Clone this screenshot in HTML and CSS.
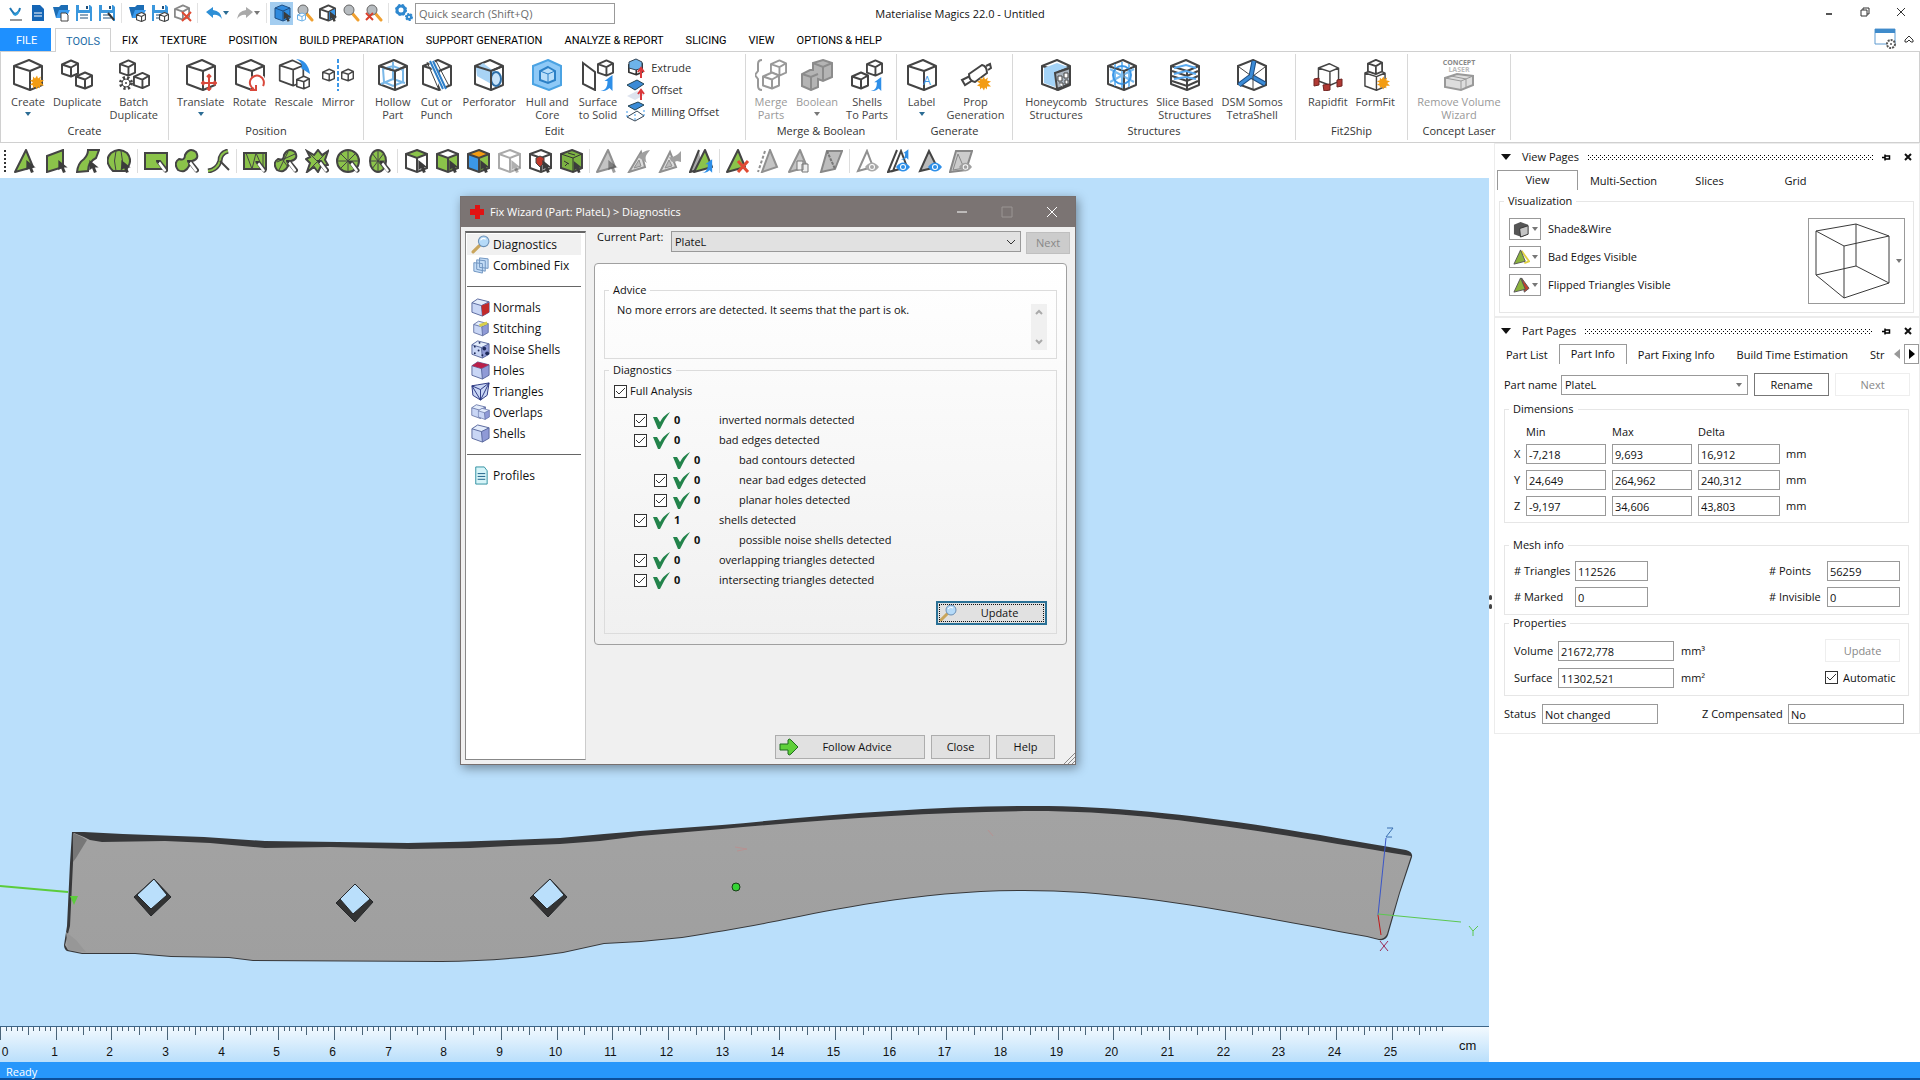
FILE: index.html
```html
<!DOCTYPE html>
<html lang="en">
<head>
  <meta charset="UTF-8">
  <meta name="viewport" content="width=device-width, initial-scale=1.0">
  <title>Materialise Magics 22.0 - Untitled</title>
  <link rel="stylesheet" href="styles.css">
</head>
<body>
  <!-- shared icon shapes -->
  <svg class="sprite" aria-hidden="true">
    <symbol id="box" viewBox="0 0 32 32"><path d="M17 1L30 7V26L18 31L2 25V7Z" fill="#fff"/><path d="M17 1L30 7V26L18 31L2 25V7ZM2 7L18 12L30 7M18 12V31" fill="none" stroke="currentColor" stroke-width="2" stroke-linejoin="round"/></symbol>
    <symbol id="box-sm" viewBox="0 0 18 18"><path d="M10 1L17 4V14L10 17L1 14V5Z" fill="#fff"/><path d="M10 1L17 4V14L10 17L1 14V5ZM1 5L10 8L17 4M10 8V17" fill="none" stroke="currentColor" stroke-width="2" stroke-linejoin="round"/></symbol>
    <symbol id="star" viewBox="0 0 14 14"><path d="M7 0L8 3L11 1L10 4L14 5L11 7L14 10L10 10L10 13L8 11L7 14L5 11L3 13L3 10L0 9L3 7L0 5L3 4L3 1L5 3Z" fill="#f39c12"/></symbol>
    <symbol id="cursor" viewBox="0 0 12 14"><path d="M1 0V11L4 9L6 14L9 13L7 8L11 8Z" fill="#3c3c3c"/></symbol>
    <symbol id="brush" viewBox="0 0 12 14"><path d="M2 1L10 11" stroke="#444" stroke-width="5" stroke-linecap="round"/><path d="M3 3L9 11" stroke="#fff" stroke-width="3" stroke-linecap="round"/><path d="M0 0L4 1L2 4Z" fill="#333"/></symbol>
    <symbol id="curl" viewBox="0 0 14 16"><path d="M1 16C7 15 8 11 8 6H5L13 0V16L10 13C7 16 4 16 1 16Z" fill="#2e8fe8"/></symbol>
    <symbol id="eye" viewBox="0 0 14 10"><path d="M0 5Q7 -4 14 5Q7 14 0 5Z" fill="currentColor"/><circle cx="7" cy="5" r="3" fill="#fff"/><circle cx="7" cy="5" r="2" fill="currentColor"/></symbol>
    <symbol id="tri" viewBox="0 0 24 24"><path d="M12 1L1 23L19 18Z" fill="#8bc34a" stroke="#444" stroke-width="2" stroke-linejoin="round"/></symbol>
    <symbol id="tri-gray" viewBox="0 0 24 24"><path d="M12 1L1 23L19 18Z" fill="#c4c4c4" stroke="#909090" stroke-width="2" stroke-linejoin="round"/></symbol>
    <symbol id="lens" viewBox="0 0 18 18"><path d="M2 16L8 10" stroke="#c9a55c" stroke-width="3" stroke-linecap="round"/><circle cx="12" cy="6" r="5" fill="#b5daf8" stroke="#6a8fb5" stroke-width="1"/><path d="M9 5Q11 2 14 4" fill="none" stroke="#fff"/></symbol>
    <symbol id="zoomer" viewBox="0 0 18 18"><path d="M10 9L16 16" stroke="#f0a030" stroke-width="3" stroke-linecap="round"/><circle cx="7" cy="6" r="5" fill="#b7bcc0" stroke="#666" stroke-width="1"/></symbol>
    <symbol id="floppy" viewBox="0 0 18 18"><path d="M1 1H15L17 3V17H1Z" fill="#3b97dd"/><path d="M4 1H14V6H4Z" fill="#fff"/><path d="M11 2H13V5H11Z" fill="#1f4e79"/><path d="M3 9H15V17H3Z" fill="#fff"/><path d="M5 11H13M5 14H13" stroke="#1f4e79"/></symbol>
    <symbol id="folder" viewBox="0 0 18 18"><path d="M1 3H7L9 1H16V14H4Z" fill="#1c6db5"/><path d="M4 14L7 6H18L14 14Z" fill="#3b9cf0"/></symbol>
    <symbol id="check" viewBox="0 0 17 17"><path d="M0 5L4 5L7 10Q10 4 17 0Q11 8 7 17H5Z" fill="#23834b"/></symbol>
    <symbol id="lbox" viewBox="0 0 20 20"><path d="M7 1L19 4V15L12 19L1 15V5Z" fill="#c9d6f5"/><path d="M7 1L19 4L11 8L1 5Z" fill="#e3ecfb"/><path d="M11 8L19 4V15L12 19Z" fill="#8f9ad6"/><path d="M7 1L19 4V15L12 19L1 15V5ZM1 5L11 8L19 4M11 8L12 19" fill="none" stroke="#58679c" stroke-width="1"/></symbol>
    <symbol id="pin" viewBox="0 0 12 10"><path d="M0 5H4M4 1V9M5 3H10V7H5" fill="none" stroke="#000" stroke-width="2"/></symbol>
    <symbol id="cross" viewBox="0 0 8 8"><path d="M1 1L7 7M7 1L1 7" stroke="currentColor" stroke-width="2"/></symbol>
  </svg>

  <header>
    <div class="titlebar">
      <div class="quick">
        <button class="qb" aria-label="Magics"><svg viewBox="0 0 18 18"><path d="M4 4Q7 9 9 10Q13 9 14 4" fill="none" stroke="#2077b4" stroke-width="2"/><path d="M6 9Q9 15 13 9V6L9 10Z" fill="#2e9bd8"/><path d="M4 16H16" stroke="#999" stroke-width="2"/></svg></button>
        <button class="qb" aria-label="New"><svg viewBox="0 0 18 18"><path d="M3 1H11L15 5V17H3Z" fill="#1565b5"/><path d="M5 9H13M5 12H13" stroke="#fff" stroke-width="1"/></svg></button>
        <button class="qb" aria-label="Open"><svg viewBox="0 0 18 18"><use href="#folder"/><path d="M9 9H14L16 11V17H9Z" fill="#fff" stroke="#444"/></svg></button>
        <button class="qb" aria-label="Save"><svg viewBox="0 0 18 18"><use href="#floppy"/></svg></button>
        <button class="qb" aria-label="Save as"><svg viewBox="0 0 18 18"><use href="#floppy"/><path d="M10 9L16 16" stroke="#333" stroke-width="2"/></svg></button>
        <span class="qsep"></span>
        <button class="qb" aria-label="Import part"><svg viewBox="0 0 18 18"><use href="#folder"/><use href="#box-sm" x="8" y="8" width="10" height="10" color="#444"/></svg></button>
        <button class="qb" aria-label="Save part"><svg viewBox="0 0 18 18"><use href="#floppy"/><use href="#box-sm" x="8" y="8" width="10" height="10" color="#444"/></svg></button>
        <button class="qb" aria-label="Unload part"><svg viewBox="0 0 18 18"><use href="#box-sm" width="16" height="17" color="#888"/><path d="M8 8L17 17M17 8L8 17" stroke="#e04a32" stroke-width="2"/></svg></button>
        <span class="qsep"></span>
        <button class="qb drop" aria-label="Undo"><svg viewBox="0 0 18 18"><path d="M1 8L8 3V6Q16 7 17 15Q13 10 8 11V14Z" fill="#2e8fd6"/></svg><i class="caret blue"></i></button>
        <button class="qb drop" aria-label="Redo"><svg viewBox="0 0 18 18"><path d="M17 8L10 3V6Q2 7 1 15Q5 10 10 11V14Z" fill="#a9a9a9"/></svg><i class="caret gray"></i></button>
        <span class="qsep"></span>
        <button class="qb on" aria-label="Pick part"><svg viewBox="0 0 18 18"><path d="M9 1L17 4V14L10 17L2 14V4Z" fill="#2f8ade" stroke="#1d4f86"/><path d="M2 4L10 7L17 4M10 7V17" fill="none" stroke="#1d4f86"/><use href="#cursor" x="10" y="7" width="9" height="11"/></svg></button>
        <button class="qb" aria-label="Zoom part"><svg viewBox="0 0 18 18"><use href="#zoomer"/><use href="#box-sm" x="1" y="8" width="9" height="10" color="#6bb0e6"/></svg></button>
        <button class="qb" aria-label="Select"><svg viewBox="0 0 18 18"><use href="#box-sm" width="17" height="18" color="#444"/><path d="M10 8L16 5V13L10 16Z" fill="#3b97e8"/><use href="#cursor" x="10" y="7" width="9" height="11"/></svg></button>
        <button class="qb" aria-label="Zoom"><svg viewBox="0 0 18 18"><use href="#zoomer"/></svg></button>
        <button class="qb" aria-label="Unzoom"><svg viewBox="0 0 18 18"><use href="#zoomer"/><path d="M1 9L8 16M8 9L1 16" stroke="#d8402c" stroke-width="2"/></svg></button>
        <span class="qsep"></span>
        <button class="qb" aria-label="Settings"><svg viewBox="0 0 18 18"><circle cx="6" cy="6" r="4" fill="none" stroke="#2f88cf" stroke-width="3"/><circle cx="6" cy="6" r="5" fill="none" stroke="#2f88cf" stroke-width="2" stroke-dasharray="2 2"/><circle cx="14" cy="13" r="2" fill="none" stroke="#2f88cf" stroke-width="2"/><circle cx="14" cy="13" r="3" fill="none" stroke="#2f88cf" stroke-width="2" stroke-dasharray="2 1"/></svg></button>
        <input class="search" type="text" placeholder="Quick search (Shift+Q)" aria-label="Quick search">
      </div>
      <div class="window-title">Materialise Magics 22.0 - Untitled</div>
      <div class="win-buttons">
        <button aria-label="Minimize"><svg viewBox="0 0 12 12"><path d="M3 8H9" stroke="#555" stroke-width="2"/></svg></button>
        <button aria-label="Restore"><svg viewBox="0 0 12 12"><path d="M2 4H8V10H2ZM4 4V2H10V8H8" fill="none" stroke="#333"/></svg></button>
        <button aria-label="Close"><svg viewBox="0 0 12 12"><path d="M2 2L10 10M10 2L2 10" stroke="#333"/></svg></button>
      </div>
    </div>

    <nav class="tabs">
      <a class="file" href="#">FILE</a>
      <a class="active" href="#">TOOLS</a>
      <a href="#">FIX</a>
      <a href="#">TEXTURE</a>
      <a href="#">POSITION</a>
      <a href="#">BUILD PREPARATION</a>
      <a href="#">SUPPORT GENERATION</a>
      <a href="#">ANALYZE &amp; REPORT</a>
      <a href="#">SLICING</a>
      <a href="#">VIEW</a>
      <a href="#">OPTIONS &amp; HELP</a>
      <div class="tabs-right">
        <svg class="layout-icon" viewBox="0 0 24 22"><path d="M1 1H21V16H1Z" fill="#fff" stroke="#5f9bd0" stroke-width="1"/><path d="M1 1H21V5H1Z" fill="#3f8bcb"/><circle cx="17" cy="16" r="4" fill="#fff" stroke="#555" stroke-width="2" stroke-dasharray="2 1"/><circle cx="17" cy="16" r="1" fill="#555"/></svg>
        <svg class="chev" viewBox="0 0 10 10"><path d="M1 6L5 2L9 6V8H7L5 6L3 8H1Z" fill="#fff" stroke="#333"/></svg>
      </div>
    </nav>

    <div class="ribbon">
      <section class="group g-create">
        <div class="items">
          <button class="rb"><svg viewBox="0 0 32 32"><use href="#box"/><use href="#star" x="18" y="16" width="14" height="15"/></svg><span>Create</span><i class="caret blue"></i></button>
          <button class="rb"><svg viewBox="0 0 32 32"><use href="#box-sm" x="0" y="0" width="18" height="19"/><use href="#box-sm" x="14" y="12" width="18" height="19"/></svg><span>Duplicate</span></button>
          <button class="rb"><svg viewBox="0 0 32 32"><use href="#box-sm" x="1" y="0" width="17" height="18"/><use href="#box-sm" x="15" y="12" width="17" height="19"/><circle cx="8" cy="24" r="5" fill="#fff" stroke="#444" stroke-width="4" stroke-dasharray="2 2"/><circle cx="8" cy="24" r="4" fill="#fff" stroke="#444"/><circle cx="8" cy="24" r="1" fill="#444"/></svg><span>Batch<br>Duplicate</span></button>
        </div>
        <h3>Create</h3>
      </section>
      <section class="group g-position">
        <div class="items">
          <button class="rb"><svg viewBox="0 0 32 32"><use href="#box"/><path d="M24 16V31M17 24H31M22 18L24 16L26 18M22 29L24 31L26 29M19 22L17 24L19 26M29 22L31 24L29 26" fill="none" stroke="#d9483b" stroke-width="2"/></svg><span>Translate</span><i class="caret blue"></i></button>
          <button class="rb"><svg viewBox="0 0 32 32"><use href="#box"/><circle cx="24" cy="23" r="8" fill="#fff"/><path d="M20 30A7 7 0 1 1 29 27M16 31H22V26" fill="none" stroke="#d9483b" stroke-width="2"/></svg><span>Rotate</span></button>
          <button class="rb"><svg viewBox="0 0 32 32"><use href="#box" x="0" y="0" width="27" height="28"/><path d="M18 0Q30 1 32 15L23 9Q26 4 18 0Z" fill="#2e8fe8"/><use href="#box-sm" x="18" y="16" width="14" height="15"/></svg><span>Rescale</span></button>
          <button class="rb"><svg viewBox="0 0 32 32"><use href="#box-sm" x="0" y="8" width="13" height="16"/><use href="#box-sm" x="19" y="8" width="13" height="16"/><path d="M16 0V32" stroke="#3b97e8" stroke-width="2" stroke-dasharray="4 2"/></svg><span>Mirror</span></button>
        </div>
        <h3>Position</h3>
      </section>
      <section class="group g-edit">
        <div class="items">
          <button class="rb"><svg viewBox="0 0 32 32"><use href="#box"/><path d="M6 10L16 7L26 11V23L16 27L7 23ZM16 3V20L4 25M16 20L28 24" fill="none" stroke="#7ab8e8" stroke-width="2"/><path d="M2 7L18 12L30 7M18 12V31" fill="none" stroke="#444" stroke-width="2"/></svg><span>Hollow<br>Part</span></button>
          <button class="rb"><svg viewBox="0 0 32 32"><use href="#box"/><path d="M7 1L20 31H26L13 1Z" fill="#fff"/><path d="M9 2L22 30M12 2L25 30" stroke="#2e7fc8" stroke-width="2"/><path d="M6 3L18 31M15 2L28 27" stroke="#444"/></svg><span>Cut or<br>Punch</span></button>
          <button class="rb"><svg viewBox="0 0 32 32"><use href="#box"/><path d="M3 9L10 4L26 16V25L20 26L4 17Z" fill="#a8d3f5"/><ellipse cx="23" cy="20" rx="5" ry="7" fill="#c7e3fa" stroke="#2e6fa8" stroke-width="2"/><path d="M2 7L18 12L30 7M18 12V31" fill="none" stroke="#444" stroke-width="2"/></svg><span>Perforator</span></button>
          <button class="rb"><svg viewBox="0 0 32 32"><path d="M17 1L30 7V26L18 31L2 25V7Z" fill="#8ec9f7" stroke="#4ba3e3" stroke-width="2"/><path d="M17 8L24 12V21L17 24L9 21V12Z" fill="#b9defa" stroke="#2c80c6" stroke-width="2"/><path d="M9 12L17 15L24 12M17 15V24" fill="none" stroke="#2c80c6"/></svg><span>Hull and<br>Core</span></button>
          <button class="rb"><svg viewBox="0 0 32 32"><path d="M1 4L13 13V31L1 25Z" fill="#fff" stroke="#444" stroke-width="2"/><use href="#box-sm" x="15" y="0" width="17" height="18"/><use href="#curl" x="17" y="16" width="15" height="16"/></svg><span>Surface<br>to Solid</span></button>
          <ul class="stack">
            <li><button><svg viewBox="0 0 20 22"><use href="#box-sm" x="2" y="0" width="15" height="22"/><path d="M3 5L10 2L16 5V11L10 13L3 11Z" fill="#6db3ea" stroke="#345" /><path d="M15 21V12M12 15L15 11L18 15" fill="none" stroke="#d9383b" stroke-width="2"/></svg>Extrude</button></li>
            <li><button><svg viewBox="0 0 20 22"><path d="M1 6L11 1L18 5L9 11Z" fill="#3b8bd6" stroke="#245"/><path d="M1 17L11 12L18 16L9 21Z" fill="#dde3ee"/><path d="M15 21V12M12 15L15 11L18 15" fill="none" stroke="#d9383b" stroke-width="2"/></svg>Offset</button></li>
            <li><button><svg viewBox="0 0 20 22"><path d="M2 5L12 1L18 4L9 9Z" fill="#3b8bd6" stroke="#245"/><path d="M1 16L11 10L18 15L9 20Z" fill="#fff" stroke="#345"/><path d="M1 10V16M18 9V15M9 13V20" stroke="#3b97e8" stroke-dasharray="2 2"/></svg>Milling Offset</button></li>
          </ul>
        </div>
        <h3>Edit</h3>
      </section>
      <section class="group g-merge">
        <div class="items">
          <button class="rb" disabled><svg viewBox="0 0 32 32"><path d="M7 1Q3 1 3 5V12L0 16L3 20V27Q3 31 7 31" fill="none" stroke="#999" stroke-width="2"/><use href="#box-sm" x="15" y="0" width="17" height="18"/><use href="#box-sm" x="7" y="12" width="18" height="19"/></svg><span>Merge<br>Parts</span></button>
          <button class="rb" disabled><svg viewBox="0 0 32 32"><path d="M22 1L31 4V18L22 22L17 20V28L10 31L1 27V15L9 11H12V4Z" fill="#b4b4b4" stroke="#8c8c8c" stroke-width="2"/><path d="M12 4L22 8L31 4M22 8V22M1 15L10 18L17 15M10 18V31" fill="none" stroke="#8c8c8c" stroke-width="2"/></svg><span>Boolean</span><i class="caret gray"></i></button>
          <button class="rb"><svg viewBox="0 0 32 32"><use href="#box-sm" x="15" y="0" width="17" height="18"/><use href="#box-sm" x="0" y="12" width="18" height="19"/><use href="#curl" x="18" y="18" width="14" height="14"/></svg><span>Shells<br>To Parts</span></button>
        </div>
        <h3>Merge &amp; Boolean</h3>
      </section>
      <section class="group g-generate">
        <div class="items">
          <button class="rb"><svg viewBox="0 0 32 32"><use href="#box"/><text x="21" y="26" class="cube-letter">A</text></svg><span>Label</span><i class="caret blue"></i></button>
          <button class="rb"><svg viewBox="0 0 32 32"><path d="M2 21L10 17L13 21L5 26Z" fill="#fff" stroke="#444" stroke-width="2"/><path d="M9 15L22 6Q27 7 27 14L15 23Q9 22 9 15Z" fill="#fff" stroke="#444" stroke-width="2"/><path d="M26 7L30 5L31 9L28 11" fill="none" stroke="#444" stroke-width="2"/><use href="#star" x="17" y="17" width="14" height="15"/></svg><span>Prop<br>Generation</span></button>
        </div>
        <h3>Generate</h3>
      </section>
      <section class="group g-structures">
        <div class="items">
          <button class="rb"><svg viewBox="0 0 32 32"><use href="#box"/><path d="M4 9L17 4L28 8L18 12L15 14V28L4 24Z" fill="#a4d3f7"/><path d="M15 14L30 9V25L17 30Z" fill="#aab4be" stroke="#444" stroke-width="2"/><path d="M18 17H22V22H18ZM24 14H28V19H24ZM19 24H23V28M25 21H28V25H25Z" fill="#fff" stroke="#444"/></svg><span>Honeycomb<br>Structures</span></button>
          <button class="rb"><svg viewBox="0 0 32 32"><use href="#box"/><path d="M16 3V29M4 10L28 23M28 10L4 23M9 5L9 27M23 5V28" stroke="#7abcf0" stroke-width="2"/><circle cx="16" cy="16" r="9" fill="none" stroke="#3b97e8" stroke-width="2"/><path d="M2 7L18 12L30 7M18 12V31" fill="none" stroke="#444" stroke-width="1"/></svg><span>Structures</span></button>
          <button class="rb"><svg viewBox="0 0 32 32"><use href="#box"/><path d="M3 12L18 17L29 12M3 17L18 22L29 17M3 22L18 27L29 22" fill="none" stroke="#444" stroke-width="2"/><path d="M5 9L17 6L27 9M5 15L17 12L27 15M5 20L17 18L27 20" fill="none" stroke="#5aaaf0" stroke-width="2"/></svg><span>Slice Based<br>Structures</span></button>
          <button class="rb"><svg viewBox="0 0 32 32"><path d="M17 1L30 7V26L18 31L2 25V7Z" fill="#fff" stroke="#444" stroke-width="2"/><path d="M18 2L15 17L3 26M15 17L29 25" fill="none" stroke="#1d4f86" stroke-width="5"/><path d="M18 2L15 17L3 26M15 17L29 25" fill="none" stroke="#3b8bd6" stroke-width="3"/><path d="M3 8L14 16M29 8L17 17V30" fill="none" stroke="#444" stroke-width="1"/></svg><span>DSM Somos<br>TetraShell</span></button>
        </div>
        <h3>Structures</h3>
      </section>
      <section class="group g-fit">
        <div class="items">
          <button class="rb"><svg viewBox="0 0 32 32"><use href="#box" x="5" y="3" width="23" height="25"/><path d="M2 20L7 19V26L2 27ZM25 21L30 20V27L25 28ZM11 26L18 25V31L12 32Z" fill="#b03a34" stroke="#6e2320"/></svg><span>Rapidfit</span></button>
          <button class="rb"><svg viewBox="0 0 32 32"><use href="#box" x="1" y="9" width="30" height="23"/><use href="#box-sm" x="8" y="0" width="16" height="16"/><use href="#star" x="18" y="17" width="13" height="14"/></svg><span>FormFit</span></button>
        </div>
        <h3>Fit2Ship</h3>
      </section>
      <section class="group g-laser">
        <div class="items">
          <button class="rb" disabled><svg viewBox="0 0 32 32"><text x="16" y="6" class="laser-dark">CONCEPT</text><text x="16" y="13" class="laser-light">LASER</text><path d="M2 19L14 15L30 17V26L18 31L2 28Z" fill="#ddd" stroke="#999" stroke-width="2"/><path d="M2 19L18 22L30 17M18 22V31M8 17L23 20M23 20V28" fill="none" stroke="#999" stroke-width="1"/></svg><span>Remove Volume<br>Wizard</span></button>
        </div>
        <h3>Concept Laser</h3>
      </section>
    </div>
  </header>

  <main>
    <div class="left">
      <div class="toolbar">
        <span class="grip"></span>
        <button class="tb" aria-label="Mark triangle"><svg viewBox="0 0 24 24"><use href="#tri"/><use href="#cursor" x="11" y="11" width="12" height="13"/></svg></button>
        <button class="tb" aria-label="Mark plane"><svg viewBox="0 0 24 24"><path d="M2 7L18 1V18L2 23Z" fill="#8bc34a" stroke="#444" stroke-width="2"/><use href="#cursor" x="12" y="11" width="12" height="13"/></svg></button>
        <button class="tb" aria-label="Mark surface"><svg viewBox="0 0 24 24"><path d="M12 1H23L20 9Q12 13 12 22L1 23Q2 14 8 10Q12 6 12 1Z" fill="#8bc34a" stroke="#444" stroke-width="2"/><use href="#cursor" x="12" y="11" width="12" height="13"/></svg></button>
        <button class="tb" aria-label="Mark shell"><svg viewBox="0 0 24 24"><path d="M6 22Q-4 12 4 4Q12 -2 20 4Q27 12 18 22Z" fill="#8bc34a" stroke="#444" stroke-width="2"/><path d="M9 22Q6 12 9 2M14 22Q17 12 14 2" fill="none" stroke="#444"/><use href="#cursor" x="13" y="11" width="12" height="13"/></svg></button>
        <span class="tsep"></span>
        <button class="tb" aria-label="Rectangle"><svg viewBox="0 0 24 24"><path d="M1 4H23V20H1Z" fill="#8bc34a" stroke="#444" stroke-width="2"/><use href="#brush" x="12" y="11" width="12" height="13"/></svg></button>
        <button class="tb" aria-label="Free form"><svg viewBox="0 0 24 24"><path d="M4 10Q10 12 10 6Q14 -2 21 3Q25 10 17 12Q14 13 14 17Q10 25 3 21Q-2 14 4 10Z" fill="#8bc34a" stroke="#444" stroke-width="2"/><use href="#brush" x="12" y="11" width="12" height="13"/></svg></button>
        <button class="tb" aria-label="Polyline"><svg viewBox="0 0 24 24"><path d="M22 2Q14 4 14 12Q11 21 2 22" fill="none" stroke="#444" stroke-width="5"/><path d="M22 2Q14 4 14 12Q11 21 2 22" fill="none" stroke="#8bc34a" stroke-width="2"/><path d="M14 12L23 21" stroke="#444" stroke-width="2"/></svg></button>
        <span class="tsep"></span>
        <button class="tb" aria-label="Window"><svg viewBox="0 0 24 24"><path d="M1 4H23V20H1Z" fill="#8bc34a" stroke="#444" stroke-width="2"/><path d="M3 4L9 20L13 4L20 20V4" fill="none" stroke="#444" stroke-width="1"/><use href="#brush" x="12" y="12" width="12" height="12"/></svg></button>
        <button class="tb" aria-label="Lasso"><svg viewBox="0 0 24 24"><path d="M4 10Q10 12 10 6Q14 -2 21 3Q25 10 17 12Q14 13 14 17Q10 25 3 21Q-2 14 4 10Z" fill="#8bc34a" stroke="#444" stroke-width="2"/><path d="M3 13L21 5M5 21L14 3M8 10L14 18" stroke="#444"/><use href="#brush" x="12" y="11" width="12" height="13"/></svg></button>
        <button class="tb" aria-label="Expand"><svg viewBox="0 0 24 24"><path d="M2 2L9 6L13 1L17 6L23 2L20 11L23 16L16 17L13 23L9 18L2 23L5 14L1 10L5 8Z" fill="#8bc34a" stroke="#444" stroke-width="2"/><path d="M3 3L20 20M22 3L4 21" stroke="#444"/><use href="#brush" x="12" y="11" width="12" height="13"/></svg></button>
        <button class="tb" aria-label="Ring"><svg viewBox="0 0 24 24"><circle cx="12" cy="12" r="11" fill="#8bc34a" stroke="#444" stroke-width="2"/><path d="M12 1V23M1 12H23M4 4L20 20M20 4L4 20" stroke="#444"/><use href="#brush" x="12" y="12" width="12" height="12"/></svg></button>
        <button class="tb" aria-label="Half ring"><svg viewBox="0 0 24 24"><ellipse cx="11" cy="12" rx="8" ry="11" fill="#8bc34a" stroke="#444" stroke-width="2"/><path d="M11 1V23M3 12H19M5 4L17 20M17 4L5 20" stroke="#444"/><use href="#brush" x="12" y="12" width="12" height="12"/></svg></button>
        <span class="tsep"></span>
        <button class="tb" aria-label="Top"><svg viewBox="0 0 24 24"><path d="M13 1L23 5L13 9L2 5Z" fill="#8bc34a"/><path d="M13 1L23 5V19L13 23L2 19V5ZM2 5L13 9L23 5M13 9V23" fill="none" stroke="#444" stroke-width="2"/><use href="#cursor" x="13" y="11" width="12" height="13"/></svg></button>
        <button class="tb" aria-label="Sides"><svg viewBox="0 0 24 24"><path d="M2 5L13 9L23 5V19L13 23L2 19Z" fill="#8bc34a"/><path d="M13 1L23 5V19L13 23L2 19V5ZM2 5L13 9L23 5M13 9V23" fill="none" stroke="#444" stroke-width="2"/><use href="#cursor" x="13" y="11" width="12" height="13"/></svg></button>
        <button class="tb" aria-label="Colors"><svg viewBox="0 0 24 24"><path d="M13 1L23 5L13 9L2 5Z" fill="#f39c12"/><path d="M2 5L13 9V23L2 19Z" fill="#3b97e8"/><path d="M13 9L23 5V19L13 23Z" fill="#8bc34a"/><path d="M13 1L23 5V19L13 23L2 19V5ZM2 5L13 9L23 5M13 9V23" fill="none" stroke="#444" stroke-width="2"/><use href="#cursor" x="13" y="11" width="12" height="13"/></svg></button>
        <button class="tb" aria-label="Wire" disabled><svg viewBox="0 0 24 24"><path d="M13 1L23 5V19L13 23L2 19V5ZM2 5L13 9L23 5M13 9V23" fill="none" stroke="#aaa" stroke-width="2"/><use href="#cursor" x="13" y="11" width="12" height="13" opacity="0.4"/></svg></button>
        <button class="tb" aria-label="Hole"><svg viewBox="0 0 24 24"><path d="M13 1L23 5V19L13 23L2 19V5ZM2 5L13 9L23 5M13 9V23" fill="none" stroke="#444" stroke-width="2"/><path d="M8 9L12 7L16 9V14L12 18L8 14Z" fill="#c0392b" stroke="#444"/><use href="#cursor" x="13" y="11" width="12" height="13"/></svg></button>
        <button class="tb" aria-label="All"><svg viewBox="0 0 24 24"><path d="M13 1L23 5V19L14 23L2 19V5Z" fill="#7cb342" stroke="#444" stroke-width="2"/><path d="M2 5L14 9L23 5M14 9V23M5 12L10 15M6 17L9 14M9 4L16 6" fill="none" stroke="#333" stroke-width="1"/><use href="#cursor" x="13" y="12" width="12" height="12"/></svg></button>
        <span class="tsep"></span>
        <button class="tb" aria-label="Unmark" disabled><svg viewBox="0 0 24 24"><use href="#tri-gray"/><use href="#cursor" x="11" y="11" width="12" height="13" opacity="0.5"/></svg></button>
        <button class="tb" aria-label="Unmark all" disabled><svg viewBox="0 0 24 24"><path d="M14 3L2 23L18 18Z" fill="#ddd" stroke="#909090" stroke-width="2"/><path d="M12 11L7 19L14 17Z" fill="#bbb" stroke="#909090"/><path d="M11 8Q15 2 23 1L20 5Q17 9 20 14Z" fill="#a0a0a0"/></svg></button>
        <button class="tb" aria-label="Invert part" disabled><svg viewBox="0 0 24 24"><path d="M12 3L2 23L18 18Z" fill="#ddd" stroke="#909090" stroke-width="2"/><path d="M11 11L7 19L14 17Z" fill="#bbb" stroke="#909090"/><path d="M11 8Q17 9 23 2V13L19 12Q15 14 13 12Z" fill="#a0a0a0"/></svg></button>
        <button class="tb" aria-label="Invert"><svg viewBox="0 0 24 24"><path d="M10 1L1 23L13 20" fill="#aaa" stroke="#444" stroke-width="2"/><use href="#tri" x="4"/><use href="#curl" x="12" y="10" width="12" height="14"/></svg></button>
        <span class="tsep"></span>
        <button class="tb" aria-label="Delete marked"><svg viewBox="0 0 24 24"><use href="#tri"/><path d="M12 12L22 23M22 12L12 23" stroke="#e04a32" stroke-width="3"/></svg></button>
        <button class="tb" aria-label="Separate" disabled><svg viewBox="0 0 24 24"><path d="M8 2L1 23" stroke="#909090" stroke-width="2" stroke-dasharray="3 2"/><path d="M13 1L5 23L20 18Z" fill="#c4c4c4" stroke="#909090" stroke-width="2"/></svg></button>
        <button class="tb" aria-label="Copy" disabled><svg viewBox="0 0 24 24"><use href="#tri-gray"/><path d="M9 12H15V21H9ZM14 15H20V23H14Z" fill="#eee" stroke="#777"/></svg></button>
        <button class="tb" aria-label="Fill" disabled><svg viewBox="0 0 24 24"><path d="M8 2H23L16 20L2 23Z" fill="#bdbdbd" stroke="#888" stroke-width="2"/><path d="M8 2L16 20" stroke="#777" stroke-width="2" stroke-dasharray="3 1"/></svg></button>
        <span class="tsep"></span>
        <button class="tb" aria-label="Hide" disabled><svg viewBox="0 0 24 24"><path d="M11 2L2 22L17 18Z" fill="#fff" stroke="#909090" stroke-width="2"/><use href="#eye" x="9" y="13" width="14" height="10" color="#a9a9a9"/></svg></button>
        <button class="tb" aria-label="Toggle"><svg viewBox="0 0 24 24"><path d="M10 1L1 23L13 20M14 2L6 22L20 18Z" fill="#fff" stroke="#444" stroke-width="2"/><use href="#curl" x="13" y="0" width="9" height="11"/><use href="#eye" x="9" y="13" width="14" height="10" color="#2e8fe8"/></svg></button>
        <button class="tb" aria-label="Show"><svg viewBox="0 0 24 24"><path d="M11 2L2 22L19 18Z" fill="#bbb" stroke="#444" stroke-width="2"/><use href="#eye" x="10" y="13" width="14" height="10" color="#2e8fe8"/></svg></button>
        <button class="tb" aria-label="Show all" disabled><svg viewBox="0 0 24 24"><path d="M7 2H23L17 21L1 23Z" fill="#ccc" stroke="#888" stroke-width="2"/><path d="M9 5L15 19L4 21Z" fill="none" stroke="#888" stroke-width="1"/><use href="#eye" x="10" y="13" width="13" height="10" color="#a0a0a0"/></svg></button>
      </div>

      <div class="viewport">
        <svg class="scene" viewBox="0 178 1489 848" preserveAspectRatio="xMinYMax slice">
          <defs>
            <linearGradient id="steel" x1="0" y1="0" x2="0" y2="1">
              <stop offset="0" stop-color="#a3a3a3"/><stop offset="1" stop-color="#9f9f9f"/>
            </linearGradient>
          </defs>
          <!-- plate side, then its face -->
          <path d="M72 832L84 832L123 834L204 837L265 841Q340 842 408 843Q460 842 510 840L560 838L604 834L640 831L722 825C830 815 930 806 1033 806C1150 806 1260 824 1406 850Q1413 852 1412 857L1400 893L1388 935Q1386 941 1379 940L1367 937C1230 912 1130 891 1024 891C920 891 830 911 784 920C745 928 720 932 682 938L641 942L604 944L563 953Q510 961 441 962L253 961L229 958L171 957L135 954L82 954L67 951Q64 949 64 945L67 926L70 863Z" fill="#37383a"/>
          <path d="M74 833L84 837L90 840L102 842L165 841L210 843L265 848L330 847L410 849L470 848L510 846L560 844L600 841L640 836L722 829C830 819 930 812 1033 811C1150 811 1260 831 1411 856L1399 893L1387 934Q1385 939 1379 939L1367 936C1230 911 1130 890 1024 890C920 890 830 910 784 919C745 927 720 931 682 937L641 941L604 943L563 952Q510 960 441 961L253 960L229 957L171 956L135 953L82 953L68 950L65 945L70 926L73 863Z" fill="url(#steel)"/>
          <path d="M73 833L82 837L87 840L76 858L73 862Z" fill="#777"/>
          <path d="M66 932L76 940L86 952L68 950Z" fill="#979797"/>
          <path d="M735 847L747 849L737 851M988 830L993 836" fill="none" stroke="#b79292" stroke-width="1"/>
          <g stroke="#25282b" stroke-width="1">
            <path d="M154 879L171 897L151 916L134 897Z" fill="#333"/>
            <path d="M154 879L167 895L151 909L137 895Z" fill="#badffb"/>
            <path d="M355 884L373 902L355 922L336 903Z" fill="#333"/>
            <path d="M355 884L370 899L353 914L340 899Z" fill="#badffb"/>
            <path d="M550 879L567 897L548 917L530 898Z" fill="#333"/>
            <path d="M550 879L564 895L547 909L533 895Z" fill="#badffb"/>
          </g>
          <path d="M0 886L68 892" stroke="#5ccc3c" stroke-width="2"/>
          <path d="M70 896H78L74 905Z" fill="#5ccc3c"/>
          <circle cx="736" cy="887" r="4" fill="#35d435" stroke="#173d17"/>
          <path d="M1386 838L1378 915" stroke="#3a56c8" stroke-width="1"/>
          <path d="M1378 915L1381 935" stroke="#c01818" stroke-width="1"/>
          <path d="M1378 914L1461 922" stroke="#5cc850" stroke-width="1"/>
          <g fill="none" stroke-width="1">
            <path d="M1387 828H1393L1386 837H1392" stroke="#3a6fb0"/>
            <path d="M1380 941L1388 951M1388 941L1380 951" stroke="#9a2c55"/>
            <path d="M1469 926L1473 931L1478 926M1473 931V936" stroke="#5cc850"/>
          </g>
        </svg>

        <div class="dialog" role="dialog" aria-label="Fix Wizard">
          <div class="dialog-title">
            <svg class="plus" viewBox="0 0 14 14"><path d="M5 0H10V4H14V10H10V14H5V10H0V4H5Z" fill="#e01212"/></svg>
            <span>Fix Wizard (Part: PlateL) &gt; Diagnostics</span>
            <div class="dialog-controls">
              <button aria-label="Minimize"><svg viewBox="0 0 12 12"><path d="M1 6H11" stroke="#fff"/></svg></button>
              <button aria-label="Maximize" disabled><svg viewBox="0 0 12 12"><path d="M1 1H11V11H1Z" fill="none" stroke="#9b9594"/></svg></button>
              <button aria-label="Close"><svg viewBox="0 0 12 12"><path d="M1 1L11 11M11 1L1 11" stroke="#fff"/></svg></button>
            </div>
          </div>
          <div class="dialog-body">
            <ul class="pages">
              <li class="active"><a href="#"><svg viewBox="0 0 18 18"><use href="#lens"/></svg>Diagnostics</a></li>
              <li><a href="#"><svg viewBox="0 0 20 20"><path d="M3 7L12 8V18L3 16ZM6 4L15 5V16L6 14ZM9 2L18 3V13L9 12Z" fill="#c3dcf6" stroke="#6f93c0"/></svg>Combined Fix</a></li>
              <li class="rule"></li>
              <li><a href="#"><svg viewBox="0 0 20 20"><use href="#lbox"/><path d="M11 8L19 5V15L12 19Z" fill="#c22a2a"/></svg>Normals</a></li>
              <li><a href="#"><svg viewBox="0 0 20 20"><use href="#lbox" x="2" y="1" width="17" height="18"/><path d="M9 7L17 4" stroke="#d8cf4a" stroke-width="3"/></svg>Stitching</a></li>
              <li><a href="#"><svg viewBox="0 0 20 20"><use href="#lbox"/><g fill="#1e2a5a"><circle cx="4" cy="7" r="1"/><circle cx="8" cy="11" r="1"/><circle cx="4" cy="14" r="1"/><circle cx="14" cy="9" r="2"/><circle cx="17" cy="14" r="2"/><circle cx="9" cy="3" r="1"/><circle cx="12" cy="16" r="1"/></g></svg>Noise Shells</a></li>
              <li><a href="#"><svg viewBox="0 0 20 20"><use href="#lbox"/><path d="M7 1L19 4L11 8L1 5Z" fill="#b8204a"/></svg>Holes</a></li>
              <li><a href="#"><svg viewBox="0 0 20 20"><path d="M7 3L19 1L17 14L10 19L2 14L1 4Z" fill="#c9d6f5" stroke="#29357f"/><path d="M1 4L10 8L19 1M10 8V19M1 4L10 19L19 1" fill="none" stroke="#29357f"/></svg>Triangles</a></li>
              <li><a href="#"><svg viewBox="0 0 20 20"><use href="#lbox" x="0" y="0" width="16" height="18"/><use href="#lbox" x="7" y="4" width="13" height="15"/></svg>Overlaps</a></li>
              <li><a href="#"><svg viewBox="0 0 20 20"><use href="#lbox"/></svg>Shells</a></li>
              <li class="rule"></li>
              <li><a href="#"><svg viewBox="0 0 20 20"><path d="M5 1H14L17 5V19H5Z" fill="#d6f4f8" stroke="#2f8fa0"/><path d="M7 8H15M7 11H15M7 14H15" stroke="#1c5f86" stroke-width="1"/></svg>Profiles</a></li>
            </ul>
            <div class="wizard">
              <div class="part-row">
                <label for="current-part">Current Part:</label>
                <select id="current-part"><option>PlateL</option></select>
                <button class="btn" disabled>Next</button>
              </div>
              <div class="panel">
                <fieldset class="advice">
                  <legend>Advice</legend>
                  <p>No more errors are detected. It seems that the part is ok.</p>
                  <div class="scroll">
                    <svg viewBox="0 0 10 10"><path d="M2 7L5 4L8 7" fill="none" stroke="#aaa" stroke-width="2"/></svg>
                    <svg viewBox="0 0 10 10"><path d="M2 3L5 6L8 3" fill="none" stroke="#aaa" stroke-width="2"/></svg>
                  </div>
                </fieldset>
                <fieldset class="diag">
                  <legend>Diagnostics</legend>
                  <label class="full"><input type="checkbox" checked>Full Analysis</label>
                  <label class="row"><input type="checkbox" checked><svg><use href="#check"/></svg><b>0</b>inverted normals detected</label>
                  <label class="row"><input type="checkbox" checked><svg><use href="#check"/></svg><b>0</b>bad edges detected</label>
                  <div class="row bare"><svg><use href="#check"/></svg><b>0</b>bad contours detected</div>
                  <label class="row sub"><input type="checkbox" checked><svg><use href="#check"/></svg><b>0</b>near bad edges detected</label>
                  <label class="row sub"><input type="checkbox" checked><svg><use href="#check"/></svg><b>0</b>planar holes detected</label>
                  <label class="row"><input type="checkbox" checked><svg><use href="#check"/></svg><b>1</b>shells detected</label>
                  <div class="row bare"><svg><use href="#check"/></svg><b>0</b>possible noise shells detected</div>
                  <label class="row"><input type="checkbox" checked><svg><use href="#check"/></svg><b>0</b>overlapping triangles detected</label>
                  <label class="row"><input type="checkbox" checked><svg><use href="#check"/></svg><b>0</b>intersecting triangles detected</label>
                  <button class="btn update"><svg viewBox="0 0 18 18"><use href="#lens"/></svg><span>Update</span></button>
                </fieldset>
              </div>
              <div class="actions">
                <button class="btn follow"><svg viewBox="0 0 20 18"><path d="M1 6H9V2Q10 0 12 2L19 9L12 16Q10 18 9 16V12H1Z" fill="#5fd03a" stroke="#1f6b1f" stroke-width="1"/></svg><span>Follow Advice</span></button>
                <button class="btn">Close</button>
                <button class="btn">Help</button>
              </div>
            </div>
          </div>
          <svg class="resize" viewBox="0 0 12 12"><path d="M1 12L12 1M5 12L12 5M9 12L12 9" stroke="#888"/></svg>
        </div>
      </div>

      <svg class="ruler" id="ruler"><text class="unit" x="1459" y="23">cm</text></svg>
    </div>

    <aside>
      <div class="splitter"><i></i><i></i></div>
      <div class="side">
        <section class="side-section">
          <div class="side-head"><i class="fold"></i><h2>View Pages</h2><span class="dots"></span><svg class="pin"><use href="#pin"/></svg><svg class="x"><use href="#cross"/></svg></div>
          <div class="side-tabs even">
            <a class="active" href="#">View</a><a href="#">Multi-Section</a><a href="#">Slices</a><a href="#">Grid</a>
          </div>
          <fieldset class="visual">
            <legend>Visualization</legend>
            <div class="modes">
              <div><button class="pick" id="m1"><svg viewBox="0 0 18 18"><path d="M8 1L16 4V14L9 17L1 14V4Z" fill="#555"/><path d="M7 8L16 5V14L8 17Z" fill="#c4c4c4" stroke="#333"/></svg><i class="caret gray"></i></button><label for="m1">Shade&amp;Wire</label></div>
              <div><button class="pick" id="m2"><svg viewBox="0 0 18 18"><path d="M9 2L17 13L12 15" fill="none" stroke="#e0d040" stroke-width="2"/><path d="M8 1L1 16L13 13Z" fill="#8bb33c" stroke="#555"/></svg><i class="caret gray"></i></button><label for="m2">Bad Edges Visible</label></div>
              <div><button class="pick" id="m3"><svg viewBox="0 0 18 18"><path d="M9 1L17 12L12 16Z" fill="#c2402c" stroke="#555"/><path d="M8 1L1 16L13 13Z" fill="#8bb33c" stroke="#555"/></svg><i class="caret gray"></i></button><label for="m3">Flipped Triangles Visible</label></div>
            </div>
            <button class="orient" aria-label="Orientation">
              <svg viewBox="0 0 76 78"><path d="M2 9L42 2L75 14L30 24ZM2 9V53L30 76V24M30 76L75 61V14M2 53L42 44L75 61M42 44V2" fill="none" stroke="#3a3a3a" stroke-width="1"/></svg>
              <i class="caret gray"></i>
            </button>
          </fieldset>
        </section>
        <section class="side-section">
          <div class="side-head"><i class="fold"></i><h2>Part Pages</h2><span class="dots"></span><svg class="pin"><use href="#pin"/></svg><svg class="x"><use href="#cross"/></svg></div>
          <div class="side-tabs">
            <div class="tab-list"><a href="#">Part List</a><a class="active" href="#">Part Info</a><a href="#">Part Fixing Info</a><a href="#">Build Time Estimation</a><a class="last" href="#">Str</a></div>
            <button class="arrow" aria-label="Scroll left"><svg viewBox="0 0 8 12"><path d="M7 1V11L1 6Z" fill="#999"/></svg></button>
            <button class="arrow boxed" aria-label="Scroll right"><svg viewBox="0 0 8 12"><path d="M1 1V11L7 6Z" fill="#000"/></svg></button>
          </div>
          <div class="name-row">
            <label for="part-name">Part name</label>
            <select id="part-name"><option>PlateL</option></select>
            <button class="flat">Rename</button>
            <button class="flat" disabled>Next</button>
          </div>
          <fieldset class="dims">
            <legend>Dimensions</legend>
            <table>
              <tr><th></th><th>Min</th><th>Max</th><th>Delta</th><th></th></tr>
              <tr><th>X</th><td><input value="-7,218" aria-label="X min"></td><td><input value="9,693" aria-label="X max"></td><td><input value="16,912" aria-label="X delta"></td><td>mm</td></tr>
              <tr><th>Y</th><td><input value="24,649" aria-label="Y min"></td><td><input value="264,962" aria-label="Y max"></td><td><input value="240,312" aria-label="Y delta"></td><td>mm</td></tr>
              <tr><th>Z</th><td><input value="-9,197" aria-label="Z min"></td><td><input value="34,606" aria-label="Z max"></td><td><input value="43,803" aria-label="Z delta"></td><td>mm</td></tr>
            </table>
          </fieldset>
          <fieldset class="mesh">
            <legend>Mesh info</legend>
            <div class="mesh-grid">
              <label for="tris"># Triangles</label><input id="tris" value="112526"><span></span>
              <label for="points"># Points</label><input id="points" value="56259">
              <label for="marked"># Marked</label><input id="marked" value="0"><span></span>
              <label for="invis"># Invisible</label><input id="invis" value="0">
            </div>
          </fieldset>
          <fieldset class="props">
            <legend>Properties</legend>
            <div class="props-grid">
              <label for="volume">Volume</label><input id="volume" value="21672,778"><span>mm³</span>
              <button class="flat" disabled>Update</button>
              <label for="surface">Surface</label><input id="surface" value="11302,521"><span>mm²</span>
              <label class="auto"><input type="checkbox" checked>Automatic</label>
            </div>
          </fieldset>
          <div class="status-row">
            <label for="status">Status</label><input id="status" value="Not changed"><span></span>
            <label for="zcomp">Z Compensated</label><input id="zcomp" value="No">
          </div>
        </section>
      </div>
    </aside>
  </main>

  <footer>Ready</footer>

  <script>
    // Draw the centimetre ruler
    const ruler = document.getElementById('ruler');
    const ns = 'http://www.w3.org/2000/svg';
    const cm = 55.66;

    for (let i = 0; i < 260; i++) {
      const x = Math.round(i * cm / 10) + 0.5;
      const len = i % 10 === 0 ? 13 : i % 5 === 0 ? 8 : 4;
      const tick = document.createElementNS(ns, 'path');
      tick.setAttribute('d', `M${x} 0V${len}`);
      ruler.appendChild(tick);

      if (i % 10 === 0) {
        const label = document.createElementNS(ns, 'text');
        label.setAttribute('x', i === 0 ? 5 : x - 2);
        label.setAttribute('y', 29);
        label.textContent = i / 10;
        ruler.appendChild(label);
      }
    }
  </script>
</body>
</html>
```
FILE: styles.css
```css
* {
  box-sizing: border-box;
}

body {
  margin: 0;
  height: 100vh;
  display: flex;
  flex-direction: column;
  overflow: hidden;
  background: #fff;
  color: #111;
  font-family: "Open Sans", "Noto Sans", sans-serif;
  font-size: 11px;
  line-height: 16px;
}

button, input, select {
  font: inherit;
  color: inherit;
  margin: 0;
  padding: 0;
}

button {
  border: none;
  background: none;
}

a {
  color: inherit;
  text-decoration: none;
}

ul {
  list-style: none;
  margin: 0;
  padding: 0;
}

h2, h3, p {
  margin: 0;
  font-size: 11px;
  font-weight: normal;
}

fieldset {
  margin: 0;
  min-width: 0;
}

legend {
  padding: 0 4px;
}

.sprite {
  display: none;
}

.caret {
  display: inline-block;
  border: 3px solid transparent;
  border-top: 4px solid #777;
  border-bottom: none;
}

.caret.blue {
  border-top-color: #2b6c94;
}

/* title bar */
.titlebar {
  display: grid;
  grid-template-columns: 1fr auto 1fr;
  height: 28px;
}

.quick {
  display: flex;
  align-items: center;
  height: 26px;
  padding-left: 3px;
}

.qb {
  flex: none;
  width: 23px;
  height: 23px;
  display: flex;
  align-items: center;
  justify-content: center;
}

.qb svg {
  flex: none;
  width: 18px;
  height: 18px;
}

.qb.drop {
  width: 31px;
}

.qb.on {
  background: #a3cdf0;
}

.qsep {
  flex: none;
  width: 1px;
  height: 20px;
  margin: 0 3px;
  background: #e2e2e2;
}

.search {
  width: 200px;
  height: 21px;
  padding: 0 3px;
  border: 1px solid #999;
}

.search::placeholder {
  color: #6b6b6b;
}

.window-title {
  line-height: 28px;
}

.win-buttons {
  display: flex;
  justify-content: flex-end;
  gap: 24px;
  padding: 6px 13px 0 0;
}

.win-buttons button {
  width: 12px;
  height: 12px;
}

.win-buttons svg, .dialog-controls svg {
  display: block;
}

/* ribbon tabs */
.tabs {
  display: flex;
  height: 23px;
  font-family: Roboto, "Open Sans", sans-serif;
  line-height: 26px;
  color: #000;
}

.tabs a {
  padding: 0 11px;
}

.tabs .file {
  width: 51px;
  padding: 0 16px;
  margin-right: 4px;
  background: #1e90ff;
  color: #fff;
}

.tabs .active {
  position: relative;
  height: 24px;
  padding: 0 10px;
  border: 1px solid #d0d0d0;
  border-bottom: none;
  background: #fff;
  color: #1c6ba5;
}

.tabs-right {
  display: flex;
  gap: 6px;
  margin-left: auto;
  padding-right: 6px;
}

.layout-icon {
  width: 24px;
  height: 22px;
}

.chev {
  width: 10px;
  height: 10px;
  margin-top: 6px;
}

/* ribbon */
.ribbon {
  display: flex;
  height: 92px;
  border: 1px solid #d0d0d0;
}

.group {
  display: flex;
  flex-direction: column;
  justify-content: space-between;
  margin: 2px 0;
  border-right: 1px solid #d8d8d8;
  color: #333;
}

.g-create { width: 168px; }
.g-position { width: 195px; }
.g-edit { width: 382px; }
.g-merge { width: 151px; }
.g-generate { width: 116px; }
.g-structures { width: 283px; }
.g-fit { width: 112px; }
.g-laser { width: 103px; }

.group h3 {
  text-align: center;
  padding-bottom: 1px;
}

.items {
  display: flex;
  justify-content: center;
}

.rb {
  min-width: 42px;
  padding: 5px 4px 0;
  display: flex;
  flex-direction: column;
  align-items: center;
  line-height: 13px;
  color: #444;
}

.rb svg {
  width: 32px;
  height: 32px;
  margin-bottom: 4px;
}

.rb .caret {
  margin-top: 4px;
}

.rb:disabled, .tb:disabled {
  color: #999;
}

.g-edit .items {
  justify-content: flex-start;
  padding-left: 6px;
}

.g-edit .rb {
  padding: 5px 5px 0;
}

.cube-letter {
  font-size: 12px;
  text-anchor: middle;
  fill: #3b97e8;
}

.laser-dark, .laser-light {
  font-size: 7px;
  font-weight: bold;
  text-anchor: middle;
  fill: #888;
}

.laser-light {
  fill: #bbb;
}

.g-laser svg {
  overflow: visible;
}

.stack {
  padding: 3px 0 0 4px;
}

.stack button {
  display: flex;
  align-items: center;
  gap: 5px;
  height: 22px;
}

.stack svg {
  width: 20px;
  height: 22px;
}

/* main area */
main {
  flex: 1;
  min-height: 0;
  display: flex;
}

.left {
  flex: 1;
  min-width: 0;
  display: flex;
  flex-direction: column;
}

.toolbar {
  display: flex;
  align-items: center;
  height: 35px;
  padding-left: 4px;
}

.grip {
  width: 6px;
  height: 22px;
  border-left: 2px dotted #333;
}

.tb {
  width: 31px;
  height: 24px;
  color: #444;
}

.tb svg {
  display: block;
  width: 24px;
  height: 24px;
  margin: 0 auto;
}

.tsep {
  width: 1px;
  height: 24px;
  margin: 0 2px 0 3px;
  background: #ddd;
}

.viewport {
  flex: 1;
  min-height: 0;
  position: relative;
  background: #badffb;
}

.scene {
  position: absolute;
  inset: 0;
  width: 100%;
  height: 100%;
}

.ruler {
  display: block;
  width: 100%;
  height: 36px;
  border-top: 1px solid #3d6486;
  background: linear-gradient(#f2f9fe, #badffb);
  stroke: #4a6478;
}

.ruler text {
  font-family: "Liberation Sans", Arial, sans-serif;
  font-size: 12px;
  text-anchor: middle;
  stroke: none;
  fill: #111;
}

.ruler .unit {
  font-size: 13px;
  text-anchor: start;
}

/* fix wizard */
.dialog {
  position: absolute;
  left: 460px;
  top: 18px;
  width: 616px;
  height: 569px;
  display: flex;
  flex-direction: column;
  border: 1px solid #77706f;
  background: #f0f0f0;
  box-shadow: 2px 3px 10px rgba(0, 0, 0, 0.4);
}

.dialog-title {
  display: flex;
  align-items: center;
  gap: 6px;
  height: 30px;
  padding-left: 9px;
  background: #7b7473;
  color: #fff;
}

.plus {
  width: 14px;
  height: 14px;
}

.dialog-controls {
  display: flex;
  gap: 33px;
  margin-left: auto;
  padding-right: 17px;
}

.dialog-controls button {
  width: 12px;
  height: 12px;
}

.dialog-body {
  flex: 1;
  display: grid;
  grid-template-columns: 121px 1fr;
  gap: 8px;
  padding: 4px 5px 4px 4px;
}

.pages {
  padding: 1px 4px 0 1px;
  border: 1px solid #888;
  border-top: 2px solid #666;
  border-right-color: #ccc;
  background: #fff;
  font-size: 12px;
}

.pages li {
  height: 21px;
}

.pages a {
  display: flex;
  align-items: center;
  gap: 3px;
  height: 21px;
  padding-left: 4px;
}

.pages svg {
  width: 19px;
  height: 19px;
}

.pages .active {
  background: #f0f0f0;
}

.pages .rule {
  border-bottom: 1px solid #666;
  height: 11px;
  margin-bottom: 10px;
}

.wizard {
  display: flex;
  flex-direction: column;
}

.part-row {
  display: flex;
  align-items: flex-start;
  height: 32px;
}

.part-row label {
  width: 77px;
  padding-left: 3px;
  line-height: 12px;
}

select {
  appearance: none;
  border: 1px solid #999;
  border-radius: 0;
  padding: 0 3px;
}

.part-row select {
  flex: 1;
  height: 21px;
  margin-right: 5px;
  background: #e1e1e1 url("data:image/svg+xml,%3Csvg xmlns='http://www.w3.org/2000/svg' width='10' height='10'%3E%3Cpath d='M1 3L5 7L9 3' fill='none' stroke='%23333'/%3E%3C/svg%3E") no-repeat right 4px center;
}

.btn {
  height: 24px;
  border: 1px solid #adadad;
  background: #e1e1e1;
}

.btn:disabled {
  width: 44px;
  height: 22px;
  margin-top: 1px;
  border-color: #bfbfbf;
  background: #ccc;
  color: #888;
}

.panel {
  margin-right: 3px;
  padding: 18px 9px 10px;
  border: 1px solid #a0a0a0;
  border-radius: 4px;
  background: linear-gradient(#fff, #f0f0f0);
}

.panel fieldset {
  border: 1px solid #dcdcdc;
  padding: 0 4px;
}

.advice {
  height: 77px;
  display: flex;
  justify-content: space-between;
}

.advice p {
  padding: 4px 0 0 8px;
}

.scroll {
  width: 16px;
  height: 46px;
  margin: 6px 5px 0 0;
  padding: 3px;
  display: flex;
  flex-direction: column;
  justify-content: space-between;
  background: #f0f0f0;
}

.scroll svg {
  width: 10px;
  height: 10px;
}

.panel .diag {
  display: flex;
  flex-direction: column;
  margin-top: 3px;
  padding: 3px 9px 8px 4px;
}

.full {
  display: flex;
  align-items: center;
  gap: 3px;
  height: 20px;
  padding-left: 5px;
  margin-bottom: 9px;
}

input[type="checkbox"] {
  appearance: none;
  width: 13px;
  height: 13px;
  border: 1px solid #333;
  background: #fff url("data:image/svg+xml,%3Csvg xmlns='http://www.w3.org/2000/svg' width='11' height='11'%3E%3Cpath d='M1 5L4 8L10 2' fill='none' stroke='%23333'/%3E%3C/svg%3E") no-repeat center;
}

.row {
  display: flex;
  align-items: center;
  height: 20px;
  padding-left: 25px;
}

.row.sub {
  padding-left: 45px;
}

.row.bare {
  padding-left: 64px;
}

.row svg {
  width: 17px;
  height: 17px;
  margin-right: 4px;
}

.row input {
  margin-right: 6px;
}

.row b {
  width: 45px;
}

.update {
  display: flex;
  align-items: center;
  align-self: flex-end;
  width: 111px;
  margin-top: 11px;
  padding: 0 1px;
  border: 2px solid #2a7196;
  outline: 1px dotted #111;
  outline-offset: -4px;
}

.update svg {
  width: 18px;
  height: 18px;
}

.btn span {
  flex: 1;
  text-align: center;
}

.update span {
  padding-right: 2px;
}

.actions {
  display: flex;
  gap: 6px;
  justify-content: flex-end;
  margin-top: auto;
  padding: 0 15px 1px 0;
}

.actions .btn {
  width: 59px;
}

.actions .follow {
  display: flex;
  align-items: center;
  width: 150px;
  padding: 0 9px 0 3px;
}

.follow svg {
  width: 20px;
  height: 18px;
}

.resize {
  position: absolute;
  right: 0;
  bottom: 0;
  width: 12px;
  height: 12px;
}

/* right side pages */
aside {
  display: flex;
  width: 431px;
}

.splitter {
  width: 5px;
  display: flex;
  flex-direction: column;
  justify-content: center;
  gap: 4px;
  padding-bottom: 2px;
}

.splitter i {
  width: 3px;
  height: 5px;
  border-radius: 2px;
  background: #444;
}

.side {
  flex: 1;
  align-self: flex-start;
  min-width: 0;
  border: 1px solid #ececec;
}

.side-section + .side-section {
  border-top: 2px solid #ececec;
  padding-bottom: 9px;
}

.side-head {
  display: flex;
  align-items: center;
  gap: 9px;
  height: 26px;
  padding: 0 7px 0 6px;
}

.side-head h2 {
  padding-left: 2px;
}

.fold {
  border: 5px solid transparent;
  border-top: 6px solid #111;
  border-bottom: none;
}

.dots {
  flex: 1;
  height: 5px;
  background: url("data:image/svg+xml,%3Csvg xmlns='http://www.w3.org/2000/svg' width='4' height='4'%3E%3Cpath d='M0 0H1V1H0ZM2 2H3V3H2Z'/%3E%3C/svg%3E");
}

.side-head .pin {
  width: 9px;
  height: 9px;
}

.side-head .x {
  width: 8px;
  height: 8px;
  margin-left: 4px;
}

.side-tabs {
  display: flex;
  height: 20px;
}

.side-tabs a {
  flex: none;
  padding: 3px 11px 0;
}

.side-tabs .active {
  padding-top: 1px;
  border: 1px solid #999;
  border-bottom: none;
}

.even {
  gap: 5px;
  padding-left: 2px;
}

.side-tabs.even a {
  width: 81px;
  padding-left: 0;
  padding-right: 0;
  text-align: center;
}

.tab-list {
  flex: 1;
  min-width: 0;
  display: flex;
}

.side-tabs .last {
  padding-right: 0;
}

.arrow {
  width: 15px;
  height: 20px;
}

.arrow.boxed {
  border: 1px solid #999;
}

.arrow svg {
  display: block;
  width: 8px;
  height: 12px;
  margin: 0 auto;
}

.side fieldset {
  border: 1px solid #e6e6e6;
  padding: 0 4px;
}

.side .visual {
  display: flex;
  justify-content: space-between;
  margin: 3px 5px 3px 4px;
  padding: 9px 8px 8px 9px;
}

.visual legend {
  margin-left: -5px;
}

.modes {
  display: flex;
  flex-direction: column;
  gap: 6px;
}

.modes div {
  display: flex;
  align-items: center;
  gap: 7px;
}

.pick {
  display: flex;
  align-items: center;
  justify-content: space-between;
  width: 32px;
  height: 22px;
  padding: 0 2px 0 3px;
  border: 1px solid #999;
}

.pick svg {
  width: 17px;
  height: 17px;
}

.orient {
  display: flex;
  align-items: center;
  justify-content: space-between;
  width: 97px;
  height: 86px;
  padding: 0 2px 0 5px;
  border: 1px solid #999;
}

.orient svg {
  width: 76px;
  height: 78px;
}

.side input:not([type="checkbox"]) {
  display: block;
  width: 100%;
  min-width: 0;
  height: 20px;
  padding: 1px 2px 0;
  border: 1px solid #999;
  background: #fff;
}

.name-row {
  display: flex;
  align-items: center;
  gap: 6px;
  height: 23px;
  margin: 9px 9px 5px;
}

.name-row label {
  width: 51px;
  white-space: nowrap;
}

.name-row select {
  flex: 1;
  height: 20px;
  background: #fff url("data:image/svg+xml,%3Csvg xmlns='http://www.w3.org/2000/svg' width='6' height='4'%3E%3Cpath d='M0 0H6L3 4Z' fill='%23777'/%3E%3C/svg%3E") no-repeat right 5px center;
}

.flat {
  width: 75px;
  height: 23px;
  border: 1px solid #777;
  background: #fff;
}

.flat:disabled {
  border-color: #eee;
  color: #888;
}

.dims, .mesh, .props {
  margin: 0 10px 0 9px;
}

.dims table {
  margin-top: 3px;
  margin-left: -1px;
  border-spacing: 6px;
  table-layout: fixed;
  width: 306px;
}

.dims th, .dims td {
  padding: 0;
  font-weight: normal;
  text-align: left;
  line-height: 12px;
}

.dims th:first-child {
  width: 6px;
}

.dims th:nth-child(2), .dims th:nth-child(3) {
  width: 80px;
}

.dims th:nth-child(4) {
  width: 82px;
}

.mesh {
  margin-top: 14px;
}

.mesh-grid {
  display: grid;
  grid-template-columns: 61px 73px 1fr 58px 73px;
  gap: 6px 0;
  align-items: center;
  padding: 8px 4px 7px 5px;
}

.props-grid {
  display: grid;
  grid-template-columns: 44px 116px 1fr 75px;
  grid-auto-rows: 23px;
  gap: 4px 0;
  align-items: center;
  padding: 8px 4px 6px 5px;
}

.props-grid span {
  padding-left: 7px;
}

.auto {
  display: flex;
  align-items: center;
  gap: 5px;
}

.status-row {
  display: grid;
  grid-template-columns: 38px 116px 1fr 86px 116px;
  align-items: center;
  margin: 8px 15px 0 9px;
  white-space: nowrap;
}

footer {
  height: 18px;
  padding-left: 6px;
  border-bottom: 2px solid #0b4f9c;
  background: #2797fb;
  color: #fff;
  line-height: 20px;
}
```
